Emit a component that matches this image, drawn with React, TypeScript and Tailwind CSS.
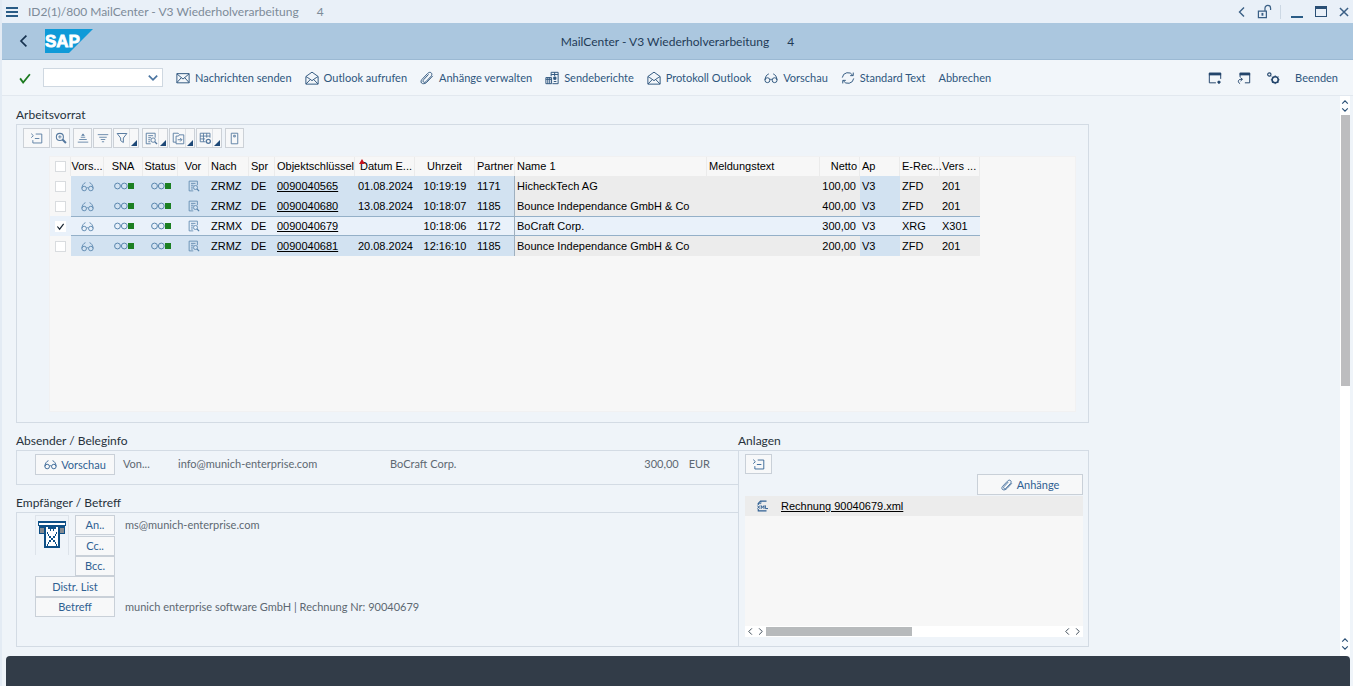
import type { ReactNode } from "react";

type IconProps = { className?: string };

function Svg({ className = "size-[14px]", children }: IconProps & { children: ReactNode }) {
  return (
    <svg viewBox="0 0 16 16" className={`shrink-0 ${className}`} fill="none" stroke="currentColor" strokeWidth="1.1" aria-hidden="true">
      {children}
    </svg>
  );
}

const Mail = () => (
  <Svg>
    <path d="M1 3h14v10.5H1zM1 3.2l7 6 7-6M1 13.3l5-5.6M15 13.3l-5-5.6" />
  </Svg>
);

const OpenMail = () => (
  <Svg>
    <path d="M1 6.3 8 1.3l7 5V15H1zM3.2 7.6 8 11l4.8-3.4M1.2 14.8 6 9.8M14.8 14.8l-4.8-5M1.2 6.4l2 1.3M14.8 6.4l-2 1.3" />
  </Svg>
);

const Clip = ({ className }: IconProps) => (
  <Svg className={className}>
    <path d="m14.6 5.6-6.8 7.2c-1.2 1.3-3.1 2-4.9 1.6C.8 13.9.7 11.4 2 9.9L8.6 2.9c1.2-1.3 3-1.9 4.2-.8s.8 2.8-.3 4L6.8 12.2c-.9 1-2.2 1.1-2.9.4s-.5-1.800.3-2.7l5.600-6" />
  </Svg>
);

const Report = () => (
  <Svg>
    <path d="M1 7.5h6.500v7H1zM3.200 7.500v7M5.400 7.500v7M1 9.500h6.500" />
    <path d="M7 1.500h8v13H8.500M7 1.500v4.500M7 4h8M11 1.500V6" />
    <path d="M10 7h2.500v2.500H10z" fill="currentColor" />
    <path d="M10 12h3" />
  </Svg>
);

const Glasses = ({ className }: IconProps) => (
  <Svg className={className}>
    <circle cx="3.900" cy="10.500" r="2.800" />
    <circle cx="12.100" cy="10.500" r="2.800" />
    <path d="M6.700 10c.8-.7 1.800-.7 2.600 0M1.100 10.300C1.300 7 3 4 5.500 3.300M14.900 10.300C14.700 7 13 4 10.500 3.300" />
  </Svg>
);

const Refresh = () => (
  <Svg>
    <path d="M1.500 7.500A6.500 6.500 0 0 1 13.500 5M14.500 8.500A6.500 6.500 0 0 1 2.500 11M14 1.800v3.500h-3.500M2 14.200v-3.500h3.500" />
  </Svg>
);

const arrows = {
  up: "M1.5 7 5 3.5 8.5 7",
  down: "M1.5 3 5 6.5 8.5 3",
  left: "M7 .5 2.5 5 7 9.5",
  right: "M3 .5 7.5 5 3 9.5",
};

const Chevron = ({ d, className = "size-2" }: { d: keyof typeof arrows; className?: string }) => (
  <svg viewBox="0 0 10 10" className={`shrink-0 ${className}`} fill="none" stroke="currentColor" strokeWidth="1.4" aria-hidden="true">
    <path d={arrows[d]} />
  </svg>
);

const Collapse = () => (
  <Svg className="size-[13px]">
    <path d="M7 2.5h7.500v11H3.500v-3.500M6 8h5.500M1.500 2l2.600 2.500L1.500 7" />
  </Svg>
);

const ZoomSearch = () => (
  <Svg className="size-3">
    <circle cx="6.500" cy="6.500" r="4.700" strokeWidth="1.400" />
    <path d="M4.200 6.500h4.600M6.500 4.200v4.600" />
    <path d="m10 10 4.600 4.600" strokeWidth="2.600" />
  </Svg>
);

const SortUp = () => (
  <Svg className="size-3">
    <path d="M5 7h6M3 10h10M1 13.500h14" />
    <path d="m8 2 2.500 3h-5z" fill="currentColor" stroke="none" />
  </Svg>
);

const SortDown = () => (
  <Svg className="size-3">
    <path d="M1 3.500h14M3 7h10M5 10h6M6.500 13h3" />
  </Svg>
);

const Funnel = () => (
  <Svg className="size-3">
    <path d="M1.500 2h13L9.800 8v6L6.200 11.500V8z" strokeWidth="1.300" />
  </Svg>
);

const DocSearch = ({ className = "size-[13px]" }: IconProps) => (
  <Svg className={className}>
    <path d="M7 14.500H1.500v-13h11V7M4 4.500h6M4 7h3.500M4 9.500h2.500M4 12h2.500" />
    <circle cx="10" cy="10" r="2.700" />
    <path d="m12 12 2.800 2.800" strokeWidth="1.600" />
  </Svg>
);

const Export = () => (
  <Svg className="size-[13px]">
    <path d="M5 12.500H1.500v-11h6l1.500 1.500M5 5h3l1-1.500h5.500v11H5zM7 9.500h5M10 7.300l2.200 2.200-2.200 2.200" />
  </Svg>
);

const GridGear = () => (
  <Svg className="size-[13px]">
    <path d="M8 12H1.500V1.500h12V7M1.500 5h12M1.500 8.500h6M5.500 1.500V12M9.500 1.500V7" />
    <circle cx="11.500" cy="11.500" r="2.500" strokeWidth="1.600" />
  </Svg>
);

const Info = () => (
  <Svg className="size-[13px]">
    <path d="M4 1.500h8v13H4zM7 4h2v2H7z" />
  </Svg>
);

const NewWindow = () => (
  <Svg>
    <path d="M9 13.500H1.500v-11h13V9" />
    <path d="M1 2h14v3H1z" fill="currentColor" stroke="none" />
    <path d="M12.500 11v3.500M10.800 12.700h3.500" strokeWidth="2" />
  </Svg>
);

const Shortcut = () => (
  <Svg>
    <path d="M3.500 7V2.500h11v11H9" />
    <path d="M3 2h12v3H3z" fill="currentColor" stroke="none" />
    <path d="M3.500 14.500c-3-1.500-2.500-5 1-5h1.500M4 7.500l2.200 2L4 11.500" />
  </Svg>
);

const Gears = () => (
  <Svg>
    <circle cx="10.500" cy="10" r="3.500" strokeWidth="1.800" />
    <circle cx="3.800" cy="4" r="1.900" strokeWidth="1.300" />
    <path d="M10.500 5v1.500M10.500 13.500V15M5.500 10H7M14 10h1.500M6.900 6.400l1 1M13 12.500l1.100 1.100M6.900 13.600l1-1M13 7.500l1.100-1.100" />
  </Svg>
);

const Unlock = () => (
  <Svg className="size-[15px]">
    <path d="M1.500 7.500h8.500v7H1.500z" strokeWidth="1.300" />
    <path d="M8.500 7.500V4.500a3 3 0 0 1 6 0v2" strokeWidth="1.300" />
    <path d="M4.800 9.500h2v3h-2z" fill="currentColor" stroke="none" />
  </Svg>
);

const XmlFile = () => (
  <svg viewBox="0 0 16 16" className="size-3 shrink-0 text-[#2f5f92]" fill="none" stroke="currentColor" aria-hidden="true">
    <path d="M3 6.500V4.500l3-3h8M3 12v2.500h11" strokeWidth="1.500" />
    <path d="M2.500 4.800h4V1.500" />
    <path d="m2 7.500 3 4M5 7.500l-3 4M7 11.800V7.500l1.800 2.500 1.800-2.500v4.300M12.500 7.200v4.200H16" strokeWidth="1.300" />
  </svg>
);

const SapLogo = () => (
  <svg viewBox="0 0 48 24" className="h-6 w-12" role="img" aria-label="SAP">
    <path d="M0 0h48L24 24H0z" fill="#0f9ad8" />
    <text x="0" y="18" fill="#fff" stroke="#fff" strokeWidth=".8" fontSize="17" fontWeight="700" fontFamily="Liberation Sans, sans-serif">
      SAP
    </text>
  </svg>
);

const Letterbox = () => (
  <svg viewBox="0 0 28 27" className="h-[27px] w-7" shapeRendering="crispEdges" aria-hidden="true">
    <path d="M0 0h28v5H0zM1 5h26v8H1zM6 5h16v22H6z" fill="#0d4f86" />
    <path d="M1 2h26v2H1z" fill="#fff" />
    <path d="M2 7h4v5H2zM22 7h4v5h-4z" fill="#858b91" />
    <path d="M8 6h2v2h2v2h1V8h2v2h1V8h2V6h2v19H8z" fill="#fff" />
    <path d="M9 11h1v2h1v2h2v2h2v-2h2v-2h1v-2h1v2h-1v2h-1v2h-2v2h2v2h1v2h1v2h-1v-2h-1v-2h-2v-2h-2v2h-2v2h-1v2H9v-2h1v-2h1v-2h2v-2h-2v-2h-1v-2H9z" fill="#0d4f86" />
  </svg>
);

function ToolButton({ icon, children }: { icon?: ReactNode; children: ReactNode }) {
  return (
    <button type="button" className="flex items-center gap-[5px] whitespace-nowrap text-[#2f567e]">
      {icon}
      {children}
    </button>
  );
}

function PushButton({ children, className = "", label }: { children: ReactNode; className?: string; label?: string }) {
  return (
    <button type="button" aria-label={label} className={`flex items-center justify-center gap-1 border border-[#c9d0d8] bg-[#f7f8f9] text-[#2f5f92] ${className}`}>
      {children}
    </button>
  );
}

function GridButton({ children, label, menu, wide, className = "" }: { children: ReactNode; label: string; menu?: boolean; wide?: boolean; className?: string }) {
  return (
    <button type="button" aria-label={label} className={`flex h-5 items-center border border-[#ccd1d7] bg-[#f7f8f9] text-[#55799f] ${wide ? "w-[27px] justify-center" : menu ? "w-[26px] justify-between pl-0.5" : "w-[19px] justify-center"} ${className}`}>
      {children}
      {menu && (
        <span className="flex h-full items-end border-l border-[#dde1e6] p-px">
          <svg viewBox="0 0 6 6" className="size-[6px]" aria-hidden="true">
            <path d="M6 0v6H0z" fill="#1d4877" />
          </svg>
        </span>
      )}
    </button>
  );
}

function TickBox({ checked, label }: { checked?: boolean; label: string }) {
  return (
    <span className="relative mx-auto grid size-[11px] place-items-center">
      <input type="checkbox" defaultChecked={checked} aria-label={label} className="peer size-[11px] appearance-none border border-[#d9dcdf] bg-white checked:border-transparent" />
      <svg viewBox="0 0 10 10" className="pointer-events-none absolute size-[9px] opacity-0 peer-checked:opacity-100" fill="none" stroke="#1a2733" strokeWidth="1.3" aria-hidden="true">
        <path d="m1.500 5 2.500 3 4.500-6" />
      </svg>
    </span>
  );
}

const Light = () => (
  <svg viewBox="0 0 20 8" className="mx-auto h-2 w-5" aria-label="grün" role="img">
    <circle cx="3.500" cy="4" r="2.900" fill="none" stroke="#5a86ad" />
    <circle cx="10.300" cy="4" r="2.900" fill="none" stroke="#5a86ad" />
    <path d="M14 1h6v6h-6z" fill="#1c7f22" />
  </svg>
);

type Row = { nach: string; key: string; datum: string; zeit: string; partner: string; name: string; netto: string; rech: string; vers: string; selected?: boolean };

const rows: Row[] = [
  { nach: "ZRMZ", key: "0090040565", datum: "01.08.2024", zeit: "10:19:19", partner: "1171", name: "HicheckTech AG", netto: "100,00", rech: "ZFD", vers: "201" },
  { nach: "ZRMZ", key: "0090040680", datum: "13.08.2024", zeit: "10:18:07", partner: "1185", name: "Bounce Independance GmbH & Co", netto: "400,00", rech: "ZFD", vers: "201" },
  { nach: "ZRMX", key: "0090040679", datum: "", zeit: "10:18:06", partner: "1172", name: "BoCraft Corp.", netto: "300,00", rech: "XRG", vers: "X301", selected: true },
  { nach: "ZRMZ", key: "0090040681", datum: "20.08.2024", zeit: "12:16:10", partner: "1185", name: "Bounce Independance GmbH & Co", netto: "200,00", rech: "ZFD", vers: "201" },
];

const columns = [
  { title: "Vors...", width: "w-[33px]", align: "text-center" },
  { title: "SNA", width: "w-[39px]", align: "text-center" },
  { title: "Status", width: "w-[35px]", align: "text-center" },
  { title: "Vor", width: "w-[31px]", align: "text-center" },
  { title: "Nach", width: "w-10", align: "pl-0.5 text-left" },
  { title: "Spr", width: "w-[26px]", align: "pl-0.5 text-left" },
  { title: "Objektschlüssel", width: "w-20", align: "pl-0.5 text-left" },
  { title: "Datum E...", width: "w-[60px]", align: "pr-0.5 text-right", sorted: true },
  { title: "Uhrzeit", width: "w-[60px]", align: "text-center" },
  { title: "Partner", width: "w-10", align: "pl-0.5 text-left" },
  { title: "Name 1", width: "w-[192px]", align: "pl-0.5 text-left" },
  { title: "Meldungstext", width: "w-[113px]", align: "pl-0.5 text-left" },
  { title: "Netto", width: "w-10", align: "pr-0.5 text-right" },
  { title: "Ap", width: "w-10", align: "pl-0.5 text-left" },
  { title: "E-Rec...", width: "w-10", align: "pl-0.5 text-left" },
  { title: "Vers ...", width: "w-10", align: "pl-0.5 text-left" },
];

function DataRow({ row }: { row: Row }) {
  const line = row.selected ? "shadow-[inset_0_1px_#94b0c8,inset_0_-1px_#94b0c8]" : "";
  const k = `p-0 ${row.selected ? "bg-[#e9f1fa]" : "bg-[#d2e2f1]"} ${line}`;
  const p = `p-0 ${row.selected ? "bg-[#e9f1fa]" : "bg-[#ececec]"} ${line}`;
  return (
    <tr className="h-5">
      <td className={`p-0 ${row.selected ? "bg-[#e9f1fa]" : "bg-[#f7f7f7]"}`}>
        <TickBox checked={row.selected} label={`Zeile ${row.key} markieren`} />
      </td>
      <td className={k}><Glasses className="mx-auto size-[13px] text-[#5a86ad]" /></td>
      <td className={k}><Light /></td>
      <td className={k}><Light /></td>
      <td className={k}><DocSearch className="mx-auto size-3 text-[#5a86ad]" /></td>
      <td className={`${k} pl-0.5`}>{row.nach}</td>
      <td className={`${k} pl-0.5`}>DE</td>
      <td className={`${k} pl-0.5`}><a href="#beleg" className="underline underline-offset-1">{row.key}</a></td>
      <td className={`${k} pr-0.5 text-right`}>{row.datum}</td>
      <td className={`${k} text-center`}>{row.zeit}</td>
      <td className={`${k} border-r border-[#9fb0bf] pl-0.5`}>{row.partner}</td>
      <td className={`${p} pl-0.5`}>{row.name}</td>
      <td className={p} />
      <td className={`${p} pr-1 text-right`}>{row.netto}</td>
      <td className={`${k} pl-0.5`}>V3</td>
      <td className={`${p} pl-0.5`}>{row.rech}</td>
      <td className={`${p} pl-0.5`}>{row.vers}</td>
      <td className="p-0" />
    </tr>
  );
}

const heading = "h-[18px] text-xs leading-[18px] text-[#26313b]";
const panel = "border border-[#d3dbe4]";

export default function App() {
  return (
    <div className="flex min-h-screen flex-col border-l-2 border-[#e3ebf4] bg-[#eff4f9] font-['Lato','Noto_Sans',sans-serif] text-[11px] leading-4 text-[#2b3640]">
      <header>
        <div className="flex h-[23px] items-center bg-[#e9f0f8] pr-1 pl-1 text-xs text-[#7d8b99]">
          <button type="button" aria-label="Menü" className="flex h-2.5 w-3 flex-col justify-between">
            <span className="h-0.5 w-full bg-[#2a5c86]" />
            <span className="h-0.5 w-full bg-[#2a5c86]" />
            <span className="h-0.5 w-full bg-[#2a5c86]" />
          </button>
          <p className="ml-2.5 flex gap-[18px]"><span>ID2(1)/800 MailCenter - V3 Wiederholverarbeitung</span><span>4</span></p>
          <div className="ml-auto flex items-center text-[#3a5f85]">
            <button type="button" aria-label="Zurückblättern"><Chevron d="left" className="size-2.5" /></button>
            <button type="button" aria-label="Entsperrt" className="ml-2.5"><Unlock /></button>
            <span className="ml-2 h-3.5 w-px bg-[#ccd8e4]" />
            <button type="button" aria-label="Minimieren" className="ml-2.5 h-3 w-3 border-b-2 border-[#2a5c86]" />
            <button type="button" aria-label="Maximieren" className="ml-3 h-[11px] w-3 border border-t-[3px] border-[#2a4f75]" />
            <button type="button" aria-label="Schließen" className="ml-3">
              <Svg className="size-2.5"><path d="m1.500 1.500 13 13M14.500 1.500l-13 13" strokeWidth="2.400" /></Svg>
            </button>
          </div>
        </div>
        <div className="flex h-[37px] items-center border-b border-[#9bb9d3] bg-[#abc7df]">
          <div className="flex flex-1 items-center">
            <button type="button" aria-label="Zurück" className="ml-4 text-[#16324f]"><Chevron d="left" className="size-3" /></button>
            <span className="ml-[15px]"><SapLogo /></span>
          </div>
          <h1 className="flex gap-[18px] pt-px text-xs text-[#1f3b57]"><span>MailCenter - V3 Wiederholverarbeitung</span><span>4</span></h1>
          <div className="flex-1" />
        </div>
        <nav aria-label="Funktionen" className="flex h-9 items-center border-b border-[#e2e8ef] bg-[#f2f6fa] pr-[15px] pl-[17px]">
          <button type="button" aria-label="Bestätigen" className="text-[#1c7a1f]">
            <Svg className="size-3"><path d="m1.500 8.500 4 5.500 9-11" strokeWidth="2.400" /></Svg>
          </button>
          <div className="relative mr-[13px] ml-3 h-[19px] w-[120px] text-[#4a74a0]">
            <select aria-label="Transaktion" className="block h-full w-full appearance-none border border-[#cfd8e1] bg-white px-1 outline-none">
              <option></option>
            </select>
            <span className="pointer-events-none absolute top-1 right-1"><Chevron d="down" className="size-3" /></span>
          </div>
          <div className="flex items-center gap-[13px]">
            <ToolButton icon={<Mail />}>Nachrichten senden</ToolButton>
            <ToolButton icon={<OpenMail />}>Outlook aufrufen</ToolButton>
            <ToolButton icon={<Clip />}>Anhänge verwalten</ToolButton>
            <ToolButton icon={<Report />}>Sendeberichte</ToolButton>
            <ToolButton icon={<OpenMail />}>Protokoll Outlook</ToolButton>
            <ToolButton icon={<Glasses />}>Vorschau</ToolButton>
            <ToolButton icon={<Refresh />}>Standard Text</ToolButton>
            <ToolButton>Abbrechen</ToolButton>
          </div>
          <div className="ml-auto flex items-center gap-[15px] text-[#23456b]">
            <button type="button" aria-label="Neues Fenster"><NewWindow /></button>
            <button type="button" aria-label="Verknüpfung"><Shortcut /></button>
            <button type="button" aria-label="Einstellungen"><Gears /></button>
            <ToolButton>Beenden</ToolButton>
          </div>
        </nav>
      </header>

      <div className="flex flex-1">
        <main className="min-w-0 flex-1 pt-2.5 pb-2 pl-3.5">
          <div className="w-full max-w-[1073px]">
            <section>
              <h2 className={heading}>Arbeitsvorrat</h2>
              <div className={`${panel} pt-[3px] pr-3 pb-2.5 pl-[6px]`}>
                <div className="flex items-center gap-px">
                  <GridButton label="Zuklappen" wide><Collapse /></GridButton>
                  <GridButton label="Details"><ZoomSearch /></GridButton>
                  <GridButton label="Aufsteigend sortieren" className="ml-0.5"><SortUp /></GridButton>
                  <GridButton label="Absteigend sortieren"><SortDown /></GridButton>
                  <GridButton label="Filter" menu><Funnel /></GridButton>
                  <GridButton label="Drucksicht" menu className="ml-0.5"><DocSearch /></GridButton>
                  <GridButton label="Export" menu><Export /></GridButton>
                  <GridButton label="Layout" menu><GridGear /></GridButton>
                  <GridButton label="Information" className="ml-0.5"><Info /></GridButton>
                </div>
                <div className="mt-2 ml-[26px] h-64 overflow-hidden border border-[#f1f1f2] bg-[#f7f7f7]">
                  <table className="w-full table-fixed border-separate border-spacing-0 whitespace-nowrap font-['Liberation_Sans',Arial,sans-serif] text-black">
                    <thead>
                      <tr className="h-[19px]">
                        <th className="w-[21px] border-r border-[#ebebeb] p-0"><TickBox label="Alle markieren" /></th>
                        {columns.map((c) => (
                          <th key={c.title} scope="col" className={`relative border-r border-[#ebebeb] p-0 pb-0.5 font-normal ${c.width} ${c.align}`}>
                            {c.sorted && (
                              <svg viewBox="0 0 6 5" className="absolute top-0.5 left-1 h-[5px] w-[6px]" aria-label="aufsteigend" role="img"><path d="M3 0l3 5H0z" fill="#c8141e" /></svg>
                            )}
                            {c.title}
                          </th>
                        ))}
                        <th className="p-0" />
                      </tr>
                    </thead>
                    <tbody>
                      {rows.map((r) => <DataRow key={r.key} row={r} />)}
                    </tbody>
                  </table>
                </div>
              </div>
            </section>

            <div className="mt-[9px] flex">
              <div className="flex min-w-0 flex-1 flex-col">
                <h2 className={heading}>Absender / Beleginfo</h2>
                <section aria-label="Absender" className={`${panel} flex h-[35px] items-start border-r-0 pt-[3px] pl-[18px] text-[#5d6872]`}>
                  <PushButton className="h-[21px] w-20"><Glasses className="size-[13px]" />Vorschau</PushButton>
                  <span className="mt-0.5 ml-2 w-[55px]">Von...</span>
                  <span className="mt-0.5 w-[212px]">info@munich-enterprise.com</span>
                  <span className="mt-0.5 flex-1">BoCraft Corp.</span>
                  <span className="mt-0.5 mr-2.5">300,00</span>
                  <span className="mt-0.5 mr-[28px]">EUR</span>
                </section>
                <h2 className={`${heading} mt-[9px]`}>Empfänger / Betreff</h2>
                <section aria-label="Empfänger" className={`${panel} flex flex-1 border-r-0 pt-0.5 pb-[29px] pl-[18px] text-[#5d6872]`}>
                  <div className="w-20">
                    <div className="flex justify-between">
                      <button type="button" aria-label="Briefkasten" className="flex h-10 w-[34px] justify-center border border-b-0 border-[#dde3ea] pt-[5px]"><Letterbox /></button>
                      <div>
                        <PushButton className="h-5 w-10">An..</PushButton>
                        <PushButton className="mt-px h-5 w-10">Cc..</PushButton>
                        <PushButton className="h-5 w-10">Bcc.</PushButton>
                      </div>
                    </div>
                    <PushButton className="h-[21px] w-20">Distr. List</PushButton>
                    <PushButton className="h-5 w-20">Betreff</PushButton>
                  </div>
                  <div className="ml-2.5 flex flex-col justify-between pt-0.5 pb-0.5">
                    <span>ms@munich-enterprise.com</span>
                    <span>munich enterprise software GmbH | Rechnung Nr: 90040679</span>
                  </div>
                </section>
              </div>

              <section className="flex w-[351px] flex-col">
                <h2 className={heading}>Anlagen</h2>
                <div className={`${panel} flex-1 pt-[3px] pr-[5px] pb-2 pl-[6px]`}>
                  <PushButton label="Anlagen zuklappen" className="h-5 w-[27px]"><Collapse /></PushButton>
                  <PushButton className="ml-auto h-[21px] w-[106px]"><Clip className="size-3" />Anhänge</PushButton>
                  <div className="mt-px h-[130px] bg-[#f7f7f7] font-['Liberation_Sans',Arial,sans-serif] text-black">
                    <div className="flex h-5 items-center bg-[#ececec] pl-[11px]">
                      <XmlFile />
                      <a href="#rechnung" className="ml-[13px] underline underline-offset-1">Rechnung 90040679.xml</a>
                    </div>
                  </div>
                  <div className="flex h-[11px] items-center bg-white px-0.5 text-[#3c4a57]">
                    <Chevron d="left" className="size-[7px]" />
                    <Chevron d="right" className="ml-[3px] size-[7px]" />
                    <div className="ml-0.5 h-[9px] flex-1"><div className="h-full w-[49%] bg-[#b7babc]" /></div>
                    <Chevron d="left" className="size-[7px]" />
                    <Chevron d="right" className="ml-[3px] size-[7px]" />
                  </div>
                </div>
              </section>
            </div>
          </div>
        </main>
        <div className="mr-[3px] flex w-[10px] flex-col items-center bg-white pt-0.5 pb-1 text-[#2a4f75]">
          <Chevron d="up" />
          <Chevron d="down" />
          <div className="mt-px w-[9px] flex-1"><div className="h-[52%] w-full bg-[#bdbdbf]" /></div>
          <Chevron d="up" />
          <Chevron d="down" />
        </div>
      </div>

      <footer className="mr-[3px] ml-1 h-[30px] rounded-t-sm bg-[#323c48]" />
    </div>
  );
}
